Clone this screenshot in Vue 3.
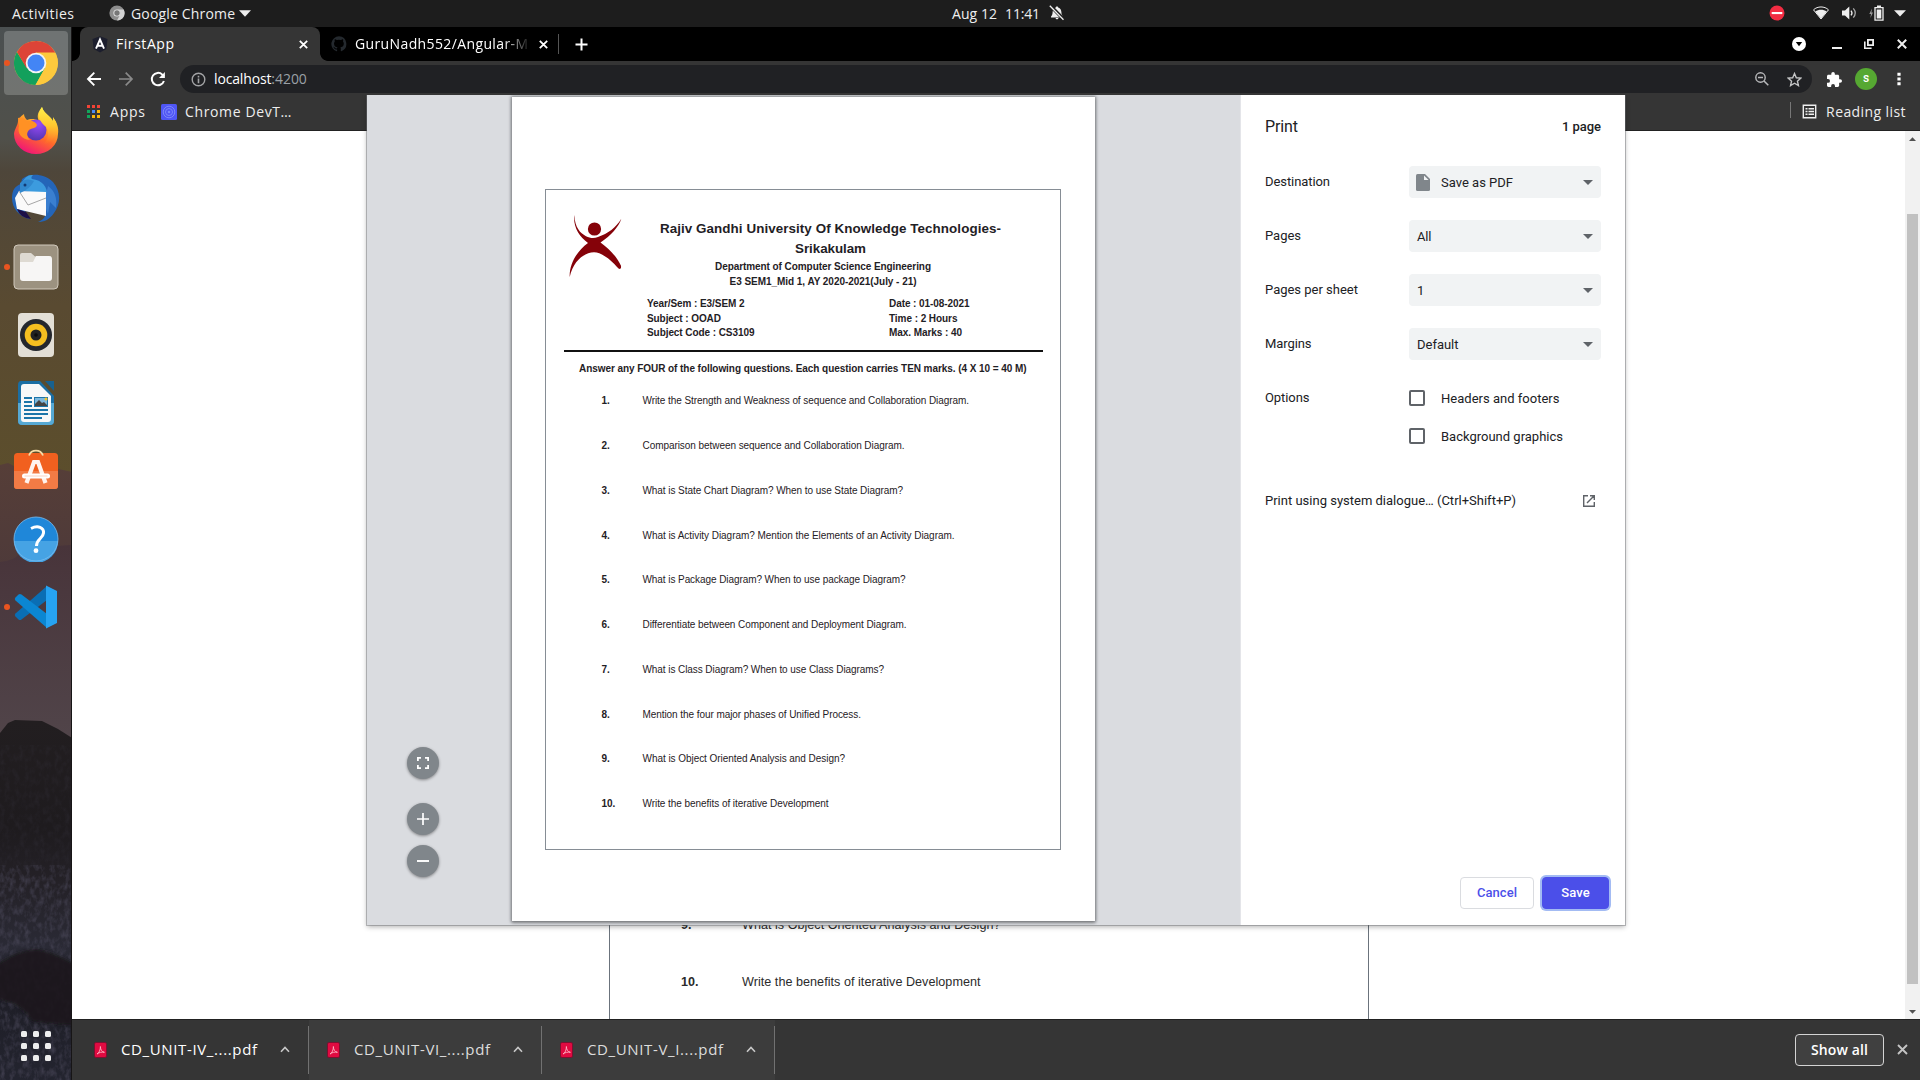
<script setup>
// Sets the tracking of a label so that it takes exactly the given width.
const vFit = {
  mounted(el, { value }) {
    const n = el.textContent.length
    const w = el.getBoundingClientRect().width
    el.style.letterSpacing = (value - w) / Math.max(1, n - 1) + 'px'
  },
}

const questions = [
  ['Write the Strength and Weakness of sequence and Collaboration Diagram.', 326.5],
  ['Comparison between sequence and Collaboration Diagram.', 262],
  ['What is State Chart Diagram? When to use State Diagram?', 260.5],
  ['What is Activity Diagram? Mention the Elements of an Activity Diagram.', 312],
  ['What is Package Diagram? When to use package Diagram?', 263],
  ['Differentiate between Component and Deployment Diagram.', 264],
  ['What is Class Diagram? When to use Class Diagrams?', 241.5],
  ['Mention the four major phases of Unified Process.', 218.5],
  ['What is Object Oriented Analysis and Design?', 202.5],
  ['Write the benefits of iterative Development', 186],
]
const metaLeft = [['Year/Sem : E3/SEM 2', 97.5], ['Subject : OOAD', 74], ['Subject Code : CS3109', 107.5]]
const metaRight = [['Date : 01-08-2021', 80.5], ['Time : 2 Hours', 68.5], ['Max. Marks : 40', 73]]
const selects = [
  { label: 'Destination', lw: 65, value: 'Save as PDF', vw: 72, file: true },
  { label: 'Pages', lw: 36, value: 'All', vw: 14.5 },
  { label: 'Pages per sheet', lw: 93, value: '1', vw: 7 },
  { label: 'Margins', lw: 46.5, value: 'Default', vw: 41.5 },
]
const downloads = ['CD_UNIT-IV_....pdf', 'CD_UNIT-VI_....pdf', 'CD_UNIT-V_I....pdf']
const appDots = ['#f44336', '#f44336', '#f44336', '#12a65c', '#4a8af4', '#fbb50b', '#12a65c', '#fbb50b', '#fbb50b']
</script>

<template>
  <div class="desktop">
    <header class="topbar">
      <span class="activities"><span v-fit="62">Activities</span></span>
      <svg class="tb-chrome" width="16" height="16" viewBox="0 0 16 16">
        <circle cx="8" cy="8" r="7.6" fill="#8d8d8d" />
        <path d="M8 4.4h6.7A7.6 7.6 0 0 1 8 15.6l3-5.8A3.6 3.6 0 0 0 8 4.4z" fill="#d2d2d2" />
        <circle cx="8" cy="8" r="3.6" fill="#e8e8e8" />
        <circle cx="8" cy="8" r="2.7" fill="#777" />
      </svg>
      <span class="tb-app"><span v-fit="104">Google Chrome</span></span>
      <svg class="tb-arrow" width="12" height="7" viewBox="0 0 12 7"><path d="M0 .3h12L6 6.8z" fill="#eee" /></svg>
      <span class="clock"><span v-fit="45">Aug 12</span><span v-fit="35" class="time">11:41</span></span>
      <svg class="bell" width="16" height="16" viewBox="0 0 16 16">
        <path d="M8 1.4c.8 0 1.2.5 1.2 1.1C11.4 3 12.3 5 12.4 7.3c.1 2.2.6 3.2 1.6 4.2v.9H2v-.9c1-1 1.5-2 1.6-4.2C3.7 5 4.6 3 6.8 2.5 6.8 1.9 7.2 1.4 8 1.4zM6.6 13h2.8c0 1.800-2.800 1.800-2.800 0z" fill="#eee" />
        <path d="M1 .3L15.3 15" stroke="#1d1d1d" stroke-width="3.4" />
        <path d="M.8 .8L14.5 14.7" stroke="#eee" stroke-width="1.3" />
      </svg>
      <div class="tray">
        <svg width="16" height="16" viewBox="0 0 16 16" class="t-dnd"><circle cx="8" cy="8" r="7.5" fill="#f22c42" /><path d="M2.7 7h10.6v2.1H2.7z" fill="#fff" /></svg>
        <svg width="16" height="14" viewBox="0 0 16 14" class="t-wifi"><path d="M.5 3.8C4.5 0 11.5 0 15.5 3.8L8 13z" fill="none" stroke="#eee" stroke-width="1" /><path d="M2.3 5.6C5.5 3 10.5 3 13.7 5.6L8 12.8z" fill="#eee" /></svg>
        <svg width="16" height="14" viewBox="0 0 16 14" class="t-vol"><path d="M0 4.5h3L7.3.6v12.800L3 9.500H0z" fill="#eee" /><path d="M9 4.600q2 2.400 0 4.800" fill="none" stroke="#eee" stroke-width="1.300" /><path d="M11.300 2.400q3.900 4.600 0 9.200" fill="none" stroke="#aaa" stroke-width="1.300" /></svg>
        <svg width="15" height="16" viewBox="0 0 15 16" class="t-bat"><path d="M3 3.500L.3 9h1.700l-.6 4L4 7.500H2.400z" fill="#999" /><path d="M6 2.700h8v12.500H6z" fill="none" stroke="#eee" stroke-width="1.300" /><path d="M8 .5h4v2H8zM7.700 4.400h4.600v9H7.700z" fill="#eee" /></svg>
        <svg width="12" height="7" viewBox="0 0 12 7" class="t-arr"><path d="M0 .3h12L6 6.500z" fill="#eee" /></svg>
      </div>
    </header>

    <div class="main">
      <nav class="dock">
        <svg class="wall" width="72" height="1053" viewBox="0 27 72 1053" preserveAspectRatio="none">
          <defs>
            <linearGradient id="sky" x1="0" y1="0" x2="0" y2="1">
              <stop offset="0" stop-color="#4b5051" /><stop offset=".25" stop-color="#50504a" />
              <stop offset=".32" stop-color="#4e463a" /><stop offset=".62" stop-color="#594a31" /><stop offset="1" stop-color="#5c4e2c" />
            </linearGradient>
            <linearGradient id="hill" x1="0" y1="0" x2="0" y2="1"><stop offset="0" stop-color="#563e38" /><stop offset="1" stop-color="#4c393a" /></linearGradient>
            <linearGradient id="low" x1="0" y1="0" x2="0" y2="1"><stop offset="0" stop-color="#48343a" /><stop offset="1" stop-color="#51454a" /></linearGradient>
            <linearGradient id="rock" x1="0" y1="0" x2="0" y2="1">
              <stop offset="0" stop-color="#221e20" /><stop offset=".3" stop-color="#1e1b1e" />
              <stop offset=".45" stop-color="#242127" /><stop offset=".63" stop-color="#2a2a35" /><stop offset=".8" stop-color="#1f1f28" /><stop offset="1" stop-color="#23242f" />
            </linearGradient>
            <filter id="grain" x="0" y="0" width="1" height="1" color-interpolation-filters="sRGB">
              <feTurbulence type="fractalNoise" baseFrequency=".2 .13" numOctaves="3" seed="4" result="n" />
              <feColorMatrix in="n" values="0 0 0 0 .3  0 0 0 0 .29  0 0 0 0 .36  2.2 0 0 0 -.9" />
              <feComposite in2="SourceGraphic" operator="in" />
            </filter>
            <filter id="soft" x="-.2" y="-.2" width="1.4" height="1.4"><feGaussianBlur stdDeviation="1.5" /></filter>
          </defs>
          <path d="M0 27h72v450H0z" fill="url(#sky)" />
          <path d="M0 465l8-2 8 4 14 0 10 4 14-3 18 4v120H0z" fill="url(#hill)" />
          <path d="M0 562q14-1 20-9l16-4 20-3 16-1v200H0z" fill="url(#low)" />
          <path d="M0 733l8-10 7-3 27 1 16 8 14 9v342H0z" fill="url(#rock)" />
          <path d="M0 745h72v335H0z" fill="#333" filter="url(#grain)" opacity=".15" />
          <path d="M0 865h72v215H0z" fill="#333" filter="url(#grain)" opacity=".55" />
          <path d="M-4 965q22-15 40-16 16 2 40 16v60q-22 0-44-4-10-18-36-22z" fill="#1a171b" opacity=".9" filter="url(#soft)" />
        </svg>
        <div class="apps">
          <div class="app active">
            <i class="run"></i>
            <svg width="46" height="46" viewBox="0 0 46 46">
              <circle cx="23" cy="23" r="22" fill="#fdc93d" />
              <path d="M3.900 12A22 22 0 0 0 22.500 45l9.500-17-9-5-9 5z" fill="#13a05c" />
              <path d="M32.500 12.500H42A22 22 0 0 1 22.500 45L32 28z" fill="#fdc93d" />
              <path d="M4 12A22 22 0 0 1 42.300 12.500H23L13.500 28z" fill="#dd4437" />
              <circle cx="23" cy="23" r="10.300" fill="#f4f4f4" /><circle cx="23" cy="23" r="8.500" fill="#4385f5" />
            </svg>
          </div>
          <div class="app fox">
            <svg width="46" height="48" viewBox="0 0 46 48">
              <defs>
                <linearGradient id="ff" x1=".8" y1="0" x2=".3" y2="1"><stop offset="0" stop-color="#fff44f" /><stop offset=".35" stop-color="#ffb02a" /><stop offset=".6" stop-color="#ff6a2a" /><stop offset="1" stop-color="#f0127a" /></linearGradient>
                <linearGradient id="fy" x1=".5" y1="0" x2=".5" y2="1"><stop offset="0" stop-color="#fff14a" /><stop offset=".5" stop-color="#ffc62f" /><stop offset="1" stop-color="#ff7a2a" stop-opacity="0" /></linearGradient>
                <radialGradient id="fp" cx=".6" cy=".2" r=".9"><stop offset="0" stop-color="#9b4bfa" /><stop offset="1" stop-color="#4a34a8" /></radialGradient>
              </defs>
              <path d="M29 1c-5 6-5 10-3 14-5-3-10-2-12-1-2-2-3-4-3-6-4 3-6 5-6 7 0 4-4 9-4 13a22 20 0 0 0 44 0c1-6-1-12-5-16l0 4C38 10 30 7 29 1z" fill="url(#ff)" />
              <circle cx="23" cy="24" r="10.500" fill="url(#fp)" />
              <path d="M5 12c4-1 7 1 9 3 5-1 9 1 10 4-1 4-6 3-8 5-3 3-2 7 1 10-9-1-13-7-11-14z" fill="#ff9124" />
              <path d="M29 1c-6 9-2 15 4 20 4 5 2 13-3 18 11-3 16-12 13-23l-3-5v4C38 10 31 8 29 1z" fill="url(#fy)" />
            </svg>
          </div>
          <div class="app">
            <svg width="50" height="50" viewBox="0 0 50 50">
              <path d="M11 5C18-1 33-1 42 8c8 9 8 22 1 31-5 7-10 9-16 9 5-2 7-5 8-8L14 37c1 4 3 6 5 8C8 43 1 34 1 24 1 16 4 12 10 10z" fill="#2465b8" />
              <path d="M10 10Q15 0 22 1c-2 2-2 3-1 4 10 1 16 8 15 17L15 17c-4-1-6 0-7 3z" fill="#3c9bde" />
              <path d="M37 12q10 7 8 22l-6-6-2 12-4-10z" fill="#3a7fd0" />
              <path d="M4 24L8 17l27 1v24L6 35z" fill="#fafafa" /><path d="M8 17l9 14L35 24" fill="none" stroke="#a6a6a6" stroke-width="1" />
              <path d="M9 9q6-6 14-2-4 8-14 12z" fill="#3188ce" /><circle cx="14" cy="11" r="1.500" fill="#123a74" />
              <path d="M6 35l9 3 5 7Q9 44 6 35z" fill="#1d1048" />
            </svg>
          </div>
          <div class="app">
            <i class="run"></i>
            <svg width="46" height="46" viewBox="0 0 46 46">
              <rect x="1" y="1" width="44" height="44" rx="4" fill="#9c9280" stroke="#d0c8bb" stroke-width="1" />
              <path d="M7 11q0-2 2-2h9l4 3.500h16V28H7z" fill="#dedad2" /><path d="M7 18h13l3-6h13q3 0 3 3v19q0 3-3 3H10q-3 0-3-3z" fill="#f7f6f5" />
            </svg>
          </div>
          <div class="app">
            <svg width="38" height="46" viewBox="0 0 38 46">
              <rect x="1" y="1" width="36" height="44" rx="4" fill="#e3dfd6" />
              <circle cx="19" cy="23" r="16" fill="#24272d" /><circle cx="19" cy="23" r="11.300" fill="#f4be20" /><circle cx="19" cy="23" r="5.500" fill="#222" /><circle cx="19" cy="23" r="1.800" fill="#0c0c0c" />
            </svg>
          </div>
          <div class="app">
            <svg width="38" height="46" viewBox="0 0 38 46">
              <path d="M4 1h19l14 15v25q0 4-4 4H5q-4 0-4-4V5q0-4 3-4z" fill="#1b6ea3" /><path d="M1 23h36v18q0 4-4 4H5q-4 0-4-4z" fill="#56a9d4" />
              <path d="M28 1h9v10z" fill="#18618f" /><path d="M7 4h15l12 12v23q0 3-3 3H7q-3 0-3-3V7q0-3 3-3z" fill="#f8f8f8" />
              <path d="M7 17h8v2H7zM7 21h8v2H7zM7 25h8v2H7zM7 29h24v2H7zM7 33h24v2H7zM7 37h18v2H7zM17 17h14v10H17z" fill="#1c75a9" />
              <path d="M18 18h12v8H18z" fill="#7db8dd" /><path d="M18 26v-2l4-4 3 3 2-1 3 3v1z" fill="#444" /><circle cx="29" cy="19" r="1.500" fill="#f3c530" />
            </svg>
          </div>
          <div class="app">
            <svg width="46" height="46" viewBox="0 0 46 46" class="store">
              <rect x="1" y="8" width="44" height="36" rx="3.500" fill="#f1601f" /><path d="M1 26h44v15q0 3-3 3H4q-3 0-3-3z" fill="#f27b45" />
              <path d="M16 10.500a7.500 7.500 0 0 1 14 0" fill="none" stroke="#f4dca8" stroke-width="1.800" />
              <path d="M13.500 38L21 17h4l7.500 21" fill="none" stroke="#fff4ef" stroke-width="4.200" /><path d="M11.500 31h23" stroke="#fff" stroke-width="5" stroke-linecap="round" /><path d="M11.500 31h23" stroke="#fbd3c2" stroke-width="1" />
            </svg>
          </div>
          <div class="app">
            <svg width="46" height="46" viewBox="0 0 46 46">
              <circle cx="23" cy="23" r="22" fill="#1f87d9" /><path d="M1 25h44a22 22 0 0 1-44 0z" fill="#46a3e4" /><circle cx="23" cy="23" r="22" fill="none" stroke="#7abcf0" stroke-width=".8" />
              <path d="M18 12.500c7-3.500 13-1 12.500 4.500-.5 5.500-7 6-7 13" fill="none" stroke="#fff" stroke-width="3" /><circle cx="23" cy="34.700" r="2.400" fill="#fff" />
            </svg>
          </div>
          <div class="app">
            <i class="run"></i>
            <svg width="44" height="44" viewBox="0 0 44 44">
              <path d="M33 1L1.500 28.500q-1.500 1.500 0 3l3 3q1.300 1 3 0L33 15z" fill="#0a6eb4" /><path d="M33 43L1.500 15.500q-1.500-1.500 0-3l3-3q1.300-1 3 0L33 29z" fill="#0b86d2" />
              <path d="M32 .5L43 6v32l-11 5.500z" fill="#26a3f2" />
            </svg>
          </div>
        </div>
        <div class="grid-launch"><i v-for="n in 9" :key="n"></i></div>
      </nav>

      <section class="browser">
        <div class="tabs">
          <div class="tab on">
            <svg width="16" height="17" viewBox="0 0 16 17"><path d="M8 .3l7.500 2.600-1.200 10L8 16.600l-6.300-3.700L.5 2.900z" fill="#1c1e2d" /><path d="M4 12.700L8 3.500l4 9.200M5.500 9.700h5" fill="none" stroke="#fff" stroke-width="1.900" /></svg>
            <span class="t-name"><span v-fit="58">FirstApp</span></span>
            <svg class="x" width="9" height="9" viewBox="0 0 9 9"><path d="M.8 .8l7.400 7.400M8.200.8L.8 8.200" stroke="#fff" stroke-width="1.800" /></svg>
          </div>
          <div class="tab two">
            <svg width="16" height="16" viewBox="0 0 16 16"><path d="M8 .3a7.700 7.700 0 0 0-2.400 15c.4 0 .5-.2.500-.4v-1.500c-2.200.5-2.700-.9-2.700-.9-.3-.9-.9-1.200-.9-1.200-.7-.5 0-.5 0-.5.8.1 1.200.8 1.200.8.7 1.200 1.900.9 2.300.7 0-.5.300-.9.5-1.100-1.700-.2-3.500-.9-3.500-3.800 0-.8.300-1.500.8-2-.1-.3-.4-1.100.1-2.100 0 0 .6-.2 2.100.8a7 7 0 0 1 3.800 0c1.500-1 2.100-.8 2.100-.8.500 1 .2 1.800.1 2.100.5.500.8 1.200.8 2 0 2.900-1.800 3.600-3.500 3.800.3.200.5.700.5 1.400v2.200c0 .2.100.5.500.4A7.700 7.700 0 0 0 8 .3z" fill="#24292e" /></svg>
            <span class="t-name fade"><span v-fit="173">GuruNadh552/Angular-M</span></span>
            <svg class="x" width="9" height="9" viewBox="0 0 9 9"><path d="M.8 .8l7.400 7.400M8.200.8L.8 8.200" stroke="#fff" stroke-width="1.800" /></svg>
          </div>
          <i class="tab-sep"></i>
          <svg class="plus" width="13" height="13" viewBox="0 0 13 13"><path d="M6.500 .5v12M.5 6.500h12" stroke="#fff" stroke-width="2" /></svg>
          <div class="wins">
            <svg width="14" height="14" viewBox="0 0 14 14"><circle cx="7" cy="7" r="7" fill="#fff" /><path d="M3.800 5h6.400L7 9.200z" fill="#000" /></svg>
            <svg width="10" height="14" viewBox="0 0 10 14"><path d="M0 10h10v2H0z" fill="#eee" /></svg>
            <svg width="10" height="10" viewBox="0 0 10 10"><path d="M3.900 .9h5.200v5.200H3.900z" fill="none" stroke="#eee" stroke-width="1.800" /><path d="M.8 2.400v6.800h6.800" fill="none" stroke="#eee" stroke-width="1.600" /></svg>
            <svg width="10" height="10" viewBox="0 0 10 10"><path d="M.8 .8l8.400 8.400M9.200.8L.8 9.200" stroke="#eee" stroke-width="2" /></svg>
          </div>
        </div>

        <div class="toolbar">
          <svg width="16" height="16" viewBox="0 0 16 16"><path d="M15 8H2.500M8.300 1.700L2 8l6.300 6.300" fill="none" stroke="#fff" stroke-width="1.900" /></svg>
          <svg width="16" height="16" viewBox="0 0 16 16"><path d="M1 8h12.500M7.700 1.700L14 8l-6.300 6.300" fill="none" stroke="#8a8a8a" stroke-width="1.700" /></svg>
          <svg width="16" height="16" viewBox="0 0 16 16"><path d="M13.900 10A6.200 6.200 0 1 1 12.300 3.600L14 5.200" fill="none" stroke="#fff" stroke-width="2" /><path d="M14.900 .9v6H9z" fill="#fff" /></svg>
          <div class="omni">
            <svg width="15" height="15" viewBox="0 0 15 15"><circle cx="7.500" cy="7.500" r="6.300" fill="none" stroke="#a2a3a5" stroke-width="1.400" /><path d="M6.700 6.500h1.600v4.700H6.700zM6.700 3.800h1.600v1.600H6.700z" fill="#a2a3a5" /></svg>
            <span class="url"><span v-fit="57.5">localhost</span><span v-fit="35.5" class="port">:4200</span></span>
            <svg class="mag" width="14" height="14" viewBox="0 0 14 14"><circle cx="5.500" cy="5.500" r="4.700" fill="none" stroke="#b8b9bb" stroke-width="1.400" /><path d="M3 5.500h5M9 9l4.300 4.300" stroke="#b8b9bb" stroke-width="1.500" /></svg>
            <svg width="15" height="15" viewBox="0 0 24 24"><path d="M12 2.500l2.900 6.700 7.300.6-5.500 4.800 1.600 7.100L12 17.900l-6.300 3.800 1.600-7.100-5.500-4.800 7.300-.6z" fill="none" stroke="#c4c5c6" stroke-width="2.200" /></svg>
          </div>
          <svg class="puz" width="15" height="15" viewBox="2 1 21 21"><path d="M20.500 11H19V7c0-1.100-.9-2-2-2h-4V3.500a2.500 2.500 0 0 0-5 0V5H4c-1.100 0-2 .9-2 2v3.800h1.500a2.700 2.700 0 0 1 0 5.400H2V20c0 1.100.9 2 2 2h3.800v-1.500a2.700 2.700 0 0 1 5.400 0V22H17c1.100 0 2-.9 2-2v-4h1.500a2.500 2.500 0 0 0 0-5z" fill="#fff" /></svg>
          <span class="avatar">s</span>
          <svg class="dots" width="4" height="14" viewBox="0 0 4 14"><path d="M.4 .7h3.200v3H.4zM.4 5.500h3.200v3H.4zM.4 10.300h3.200v3H.4z" fill="#fff" /></svg>
        </div>

        <div class="marks">
          <div class="nine"><i v-for="(c, i) in appDots" :key="i" :style="{ background: c }"></i></div>
          <span class="m1"><span v-fit="35">Apps</span></span>
          <svg class="dev" width="16" height="16" viewBox="0 0 16 16"><rect width="16" height="16" rx="1.500" fill="#4f56f5" /><circle cx="8" cy="8" r="5.800" fill="none" stroke="#7d86fa" /><circle cx="8" cy="8" r="3.500" fill="none" stroke="#7d86fa" /><circle cx="8" cy="8" r="1.300" fill="#7d86fa" /></svg>
          <span class="m2"><span v-fit="106.5">Chrome DevT…</span></span>
          <i class="m-sep"></i>
          <svg width="15" height="15" viewBox="0 0 15 15"><path d="M1.300 1.300h12.400v12.400H1.300z" fill="none" stroke="#eee" stroke-width="1.400" /><path d="M3.500 4h2v1.600h-2zM6.500 4H12v1.600H6.500zM3.500 6.700h2v1.600h-2zM6.500 6.700H12v1.600H6.500zM3.500 9.400h2V11h-2zM6.500 9.400H12V11H6.500z" fill="#eee" /></svg>
          <span class="m3"><span v-fit="79.5">Reading list</span></span>
        </div>

        <main class="viewport">
          <div class="sheet">
            <div class="bq"><b v-fit="10.5">9.</b><span v-fit="258.5">What is Object Oriented Analysis and Design?</span></div>
            <div class="bq"><b v-fit="17.5">10.</b><span v-fit="238.5">Write the benefits of iterative Development</span></div>
          </div>
          <div class="scroll">
            <svg width="7" height="4" viewBox="0 0 7 4"><path d="M0 4L3.500 .2 7 4z" fill="#505050" /></svg>
            <i class="thumb"></i>
            <svg width="7" height="4" viewBox="0 0 7 4"><path d="M0 0h7L3.500 3.800z" fill="#505050" /></svg>
          </div>
        </main>

        <footer class="shelf">
          <div v-for="(d, i) in downloads" :key="d" class="dl" :class="{ lit: i > 0 }">
            <svg width="13" height="16" viewBox="0 0 13 16"><rect x=".5" y=".5" width="12" height="15" rx="1.500" fill="#e00b41" stroke="#7c1030" /><path d="M3 12c2-1 3.500-4 3.400-7.500 0 3 1.500 5.500 4 5.800-2.700-.5-5 0-7.400 1.700z" fill="none" stroke="#ffb3c4" stroke-width=".9" /></svg>
            <span class="dl-name"><span v-fit="136">{{ d }}</span></span>
            <svg class="chev" width="10" height="7" viewBox="0 0 10 7"><path d="M1 5.800L5 1.500l4 4.300" fill="none" stroke="#c8c8c8" stroke-width="1.600" /></svg>
          </div>
          <span class="showall"><span v-fit="57">Show all</span></span>
          <svg class="sx" width="11" height="11" viewBox="0 0 11 11"><path d="M1 1l9 9M10 1l-9 9" stroke="#c4c4c4" stroke-width="1.900" /></svg>
        </footer>
      </section>
    </div>

    <div class="dialog">
      <div class="preview">
        <div class="zoomers">
          <span class="fab"><svg width="12" height="12" viewBox="0 0 12 12"><path d="M.9 4V.9H4M8 .9h3.100V4M11.100 8v3.100H8M4 11.100H.9V8" fill="none" stroke="#fff" stroke-width="1.800" /></svg></span>
          <span class="fab gap"><svg width="12" height="12" viewBox="0 0 12 12"><path d="M6 0v12M0 6h12" stroke="#fff" stroke-width="1.700" /></svg></span>
          <span class="fab"><svg width="12" height="12" viewBox="0 0 12 12"><path d="M0 6h12" stroke="#fff" stroke-width="1.900" /></svg></span>
        </div>
        <div class="paper">
          <article class="frame">
            <div class="head">
              <svg width="53" height="62" viewBox="0 0 53 62">
                <g fill="#850209"><circle cx="25.500" cy="14" r="6.600" />
                <path d="M5.300 0C6 14 11 20 17 23.500c4 2.300 8 2.500 12 1C39 21 47 14 52.300 4.300 50 13 42 23 31.500 30.500 41 38 48 47 52 56.500c.3 3-.5 4-2.500 3C43 51 34 42 25 41.500 14 42 4 52 .7 69 .2 54 8 40 19 31 10 23.500 4 13 5.300 0z" transform="scale(1 .9)" /></g>
              </svg>
              <div class="titles">
                <div class="ttl"><span v-fit="341">Rajiv Gandhi University Of Knowledge Technologies-</span></div>
                <div class="ttl"><span v-fit="71">Srikakulam</span></div>
                <div class="sub"><span v-fit="216">Department of Computer Science Engineering</span></div>
                <div class="sub two"><span v-fit="187">E3 SEM1_Mid 1, AY 2020-2021(July - 21)</span></div>
              </div>
            </div>
            <div class="meta">
              <div class="mcol"><div v-for="m in metaLeft" :key="m[0]"><span v-fit="m[1]">{{ m[0] }}</span></div></div>
              <div class="mcol"><div v-for="m in metaRight" :key="m[0]"><span v-fit="m[1]">{{ m[0] }}</span></div></div>
            </div>
            <div class="rule"></div>
            <div class="answer"><span v-fit="447.5">Answer any FOUR of the following questions. Each question carries TEN marks. (4 X 10 = 40 M)</span></div>
            <div v-for="(q, i) in questions" :key="i" class="q"><b>{{ i + 1 }}.</b><span v-fit="q[1]">{{ q[0] }}</span></div>
          </article>
        </div>
      </div>
      <aside class="side">
        <div class="s-head"><span class="h"><span v-fit="33">Print</span></span><span class="pages"><span v-fit="39">1 page</span></span></div>
        <div v-for="s in selects" :key="s.label" class="row">
          <label><span v-fit="s.lw">{{ s.label }}</span></label>
          <div class="select" :class="{ file: s.file }">
            <svg v-if="s.file" width="14" height="17" viewBox="0 0 14 17"><path d="M1.500 0H9l5 5v10.500q0 1.500-1.500 1.500h-11Q0 17 0 15.500v-14Q0 0 1.500 0z" fill="#80868b" /><path d="M8 1.500V6h4.600z" fill="#f1f3f4" /></svg>
            <span><span v-fit="s.vw">{{ s.value }}</span></span>
            <svg class="caret" width="10" height="5" viewBox="0 0 10 5"><path d="M0 0h10L5 5z" fill="#5f6368" /></svg>
          </div>
        </div>
        <div class="row opts">
          <label><span v-fit="44.5">Options</span></label>
          <div class="checks">
            <div class="chk"><i></i><span v-fit="118.5">Headers and footers</span></div>
            <div class="chk"><i></i><span v-fit="122">Background graphics</span></div>
          </div>
        </div>
        <div class="sys"><span><span v-fit="251">Print using system dialogue… (Ctrl+Shift+P)</span></span>
          <svg width="12" height="12" viewBox="0 0 12 12"><path d="M5 .7H.7v10.600h10.600V7M7 .7h4.300V5M11.200.8L4 8" fill="none" stroke="#5f6368" stroke-width="1.400" /></svg>
        </div>
        <div class="btns"><span class="btn"><span v-fit="40">Cancel</span></span><span class="btn prime"><span v-fit="28.5">Save</span></span></div>
      </aside>
    </div>
  </div>
</template>

<style>
body { margin: 0; overflow: hidden; background: #000; }
</style>

<style scoped>
.desktop { position: relative; width: 1920px; height: 1080px; overflow: hidden; font: 14px/20px "Open Sans", "Noto Sans", sans-serif; color: #eee; white-space: nowrap; display: flex; flex-direction: column; }
.desktop *, .desktop { box-sizing: border-box; }
svg { display: block; flex: none; }

.topbar { height: 27px; flex: none; background: #1d1d1d; display: flex; align-items: center; }
.activities { width: 97px; padding-left: 12px; }
.tb-chrome { margin-left: 12px; margin-top: -1px; }
.tb-app { width: 108px; margin-left: 6px; }
.tb-arrow { margin-top: -1px; }
.clock { margin-left: 701px; width: 98px; display: flex; }
.time { margin-left: 8px; }
.clock > span { flex: none; }
.bell { margin-top: -1px; margin-left: -1px; }
.tray { margin-left: auto; display: flex; align-items: center; padding-right: 14px; margin-top: -1px; }
.t-wifi { margin-left: 28px; }
.t-vol { margin-left: 13px; }
.t-bat { margin-left: 11px; margin-top: -1px; }
.t-arr { margin-left: 10px; }

.main { flex: 1; display: flex; min-height: 0; }
.dock { position: relative; width: 72px; flex: none; border-right: 1px solid #171516; display: flex; flex-direction: column; justify-content: space-between; overflow: hidden; }
.wall { position: absolute; left: 0; top: 0; }
.apps { position: relative; padding: 4px 0 0 4px; }
.app { position: relative; width: 64px; height: 64px; margin-bottom: 4px; display: flex; align-items: center; justify-content: center; }
.app.active { background: rgba(255, 255, 255, .2); border-radius: 4px; }
.app.fox svg { margin-top: -3px; }
.app .store { margin-top: -7px; }
.run { position: absolute; left: 0; top: 29px; width: 6px; height: 6px; border-radius: 50%; background: #e95420; }
.grid-launch { position: relative; display: grid; grid-template-columns: repeat(3, 6px); gap: 6px; margin: 0 0 19px 21px; }
.grid-launch i { height: 6px; border-radius: 1.5px; background: #eee; }

.browser { flex: 1; min-width: 0; display: flex; flex-direction: column; background: #353535; }
.tabs { height: 34px; flex: none; background: #000; display: flex; align-items: center; padding-left: 8px; }
.tab { height: 34px; display: flex; align-items: center; position: relative; }
.tab.on { width: 240px; background: #353535; border-radius: 8px 8px 0 0; padding: 0 12px; color: #fff; }
.tab.on::before, .tab.on::after { content: ""; position: absolute; bottom: 0; width: 8px; height: 8px; }
.tab.on::before { left: -8px; background: radial-gradient(circle at 0 0, #000 7.5px, #353535 8.2px); }
.tab.on::after { right: -8px; background: radial-gradient(circle at 100% 0, #000 7.5px, #353535 8.2px); }
.tab.two { width: 238px; padding: 0 10px 0 11px; color: #fff; }
.t-name { margin-left: 8px; }
.t-name.fade { width: 176px; -webkit-mask-image: linear-gradient(to right, #000 148px, transparent 176px); mask-image: linear-gradient(to right, #000 148px, transparent 176px); }
.x { margin-left: auto; }
.tab-sep { width: 1px; height: 20px; background: #555; }
.plus { margin-left: 16px; }
.wins { margin-left: auto; display: flex; align-items: center; padding-right: 13px; }
.wins svg { margin-left: 22px; }
.wins svg:nth-child(2) { margin-left: 26px; }
.wins svg:nth-child(4) { margin-left: 23px; }

.toolbar { height: 34px; flex: none; display: flex; align-items: center; padding: 2px 19px 0 14px; }
.toolbar > svg:nth-child(-n + 3) { margin-right: 16px; }
.toolbar > svg:nth-child(3) { margin-right: 14px; }
.omni { flex: none; width: 1632px; height: 28px; border-radius: 14px; background: #202124; display: flex; align-items: center; padding: 0 10px 0 10.5px; }
.url { margin-left: 8.5px; color: #fff; }
.port { color: #9aa0a6; }
.mag { margin-left: auto; margin-right: 18px; }
.puz { margin-left: 15px; }
.avatar { width: 22px; height: 22px; margin-left: 13px; border-radius: 50%; background: #56a832; color: #fff; font: 500 12px/21px Roboto, sans-serif; text-align: center; }
.dots { margin-left: 20px; }

.marks { height: 36px; flex: none; display: flex; align-items: center; padding: 0 14px 2px 15px; border-bottom: 1px solid #222; }
.nine { display: grid; grid-template-columns: repeat(3, 3px); gap: 2px; }
.nine i { height: 3px; }
.m1 { width: 51px; margin-left: 10px; }
.m2 { margin-left: 8px; }
.m-sep { width: 1px; height: 16px; background: #777; margin: -3px 11px 0 auto; }
.m3 { margin-left: 9px; }

.viewport { flex: 1; min-height: 0; background: #fff; display: flex; justify-content: space-between; }
.sheet { width: 760px; margin-left: 537px; border: solid #6b737c; border-width: 0 1px; padding: 784px 0 0 71px; color: #2b2b2b; font: 12.6px/20px "Liberation Sans", Arial, sans-serif; overflow: hidden; }
.bq { width: 320px; height: 57px; display: grid; grid-template-columns: 61px max-content; justify-items: start; }
.scroll { width: 15px; background: #f1f1f1; display: flex; flex-direction: column; align-items: center; padding: 6px 0 5px; }
.thumb { width: 11px; height: 770px; background: #c1c1c1; margin: 73px 0 auto; }

.shelf { height: 61px; flex: none; border-top: 1px solid #212121; display: flex; align-items: center; }
.dl { width: 233px; height: 60px; display: flex; align-items: center; padding-left: 18px; }
.dl:first-child { width: 237px; padding-left: 22px; }
.dl.lit { background: #3c3c3c; }
.dl::after { content: ""; width: 1px; height: 48px; background: #717171; margin-left: auto; }
.dl-name { width: 159px; margin: -2px 0 0 14px; font-size: 15px; color: #fff; }
.dl > svg { margin-top: -1px; }
.dl.lit .dl-name { color: #ddd; }
.showall { margin-left: auto; width: 89px; height: 32px; margin-top: -1px; border: 1px solid #d4d4d4; border-radius: 4px; background: #404040; text-align: center; font-weight: 600; line-height: 29px; color: #fff; }
.sx { margin: -1px 12px 0 13px; }

.dialog { position: absolute; left: 367px; top: 95px; width: 1258px; height: 830px; display: flex; box-shadow: 0 0 0 1px rgba(110, 112, 118, .45), 0 2px 5px rgba(0, 0, 0, .3); clip-path: inset(0 -10px -10px -10px); background: #fff; }
.preview { width: 874px; background: #dadce0; display: flex; position: relative; border-right: 1px solid #e4e5e9; overflow: hidden; }
.zoomers { width: 72px; padding-left: 40px; padding-top: 652px; margin-right: 73px; }
.fab { width: 32px; height: 32px; border-radius: 50%; background: #80868b; box-shadow: 0 1px 3px rgba(0, 0, 0, .4); display: flex; align-items: center; justify-content: center; margin-bottom: 10px; }
.fab.gap { margin-top: 24px; }
.paper { width: 583px; height: 824px; margin-top: 2px; background: #fff; box-shadow: 0 0 3px 1px rgba(60, 62, 66, .55), 0 2px 3px rgba(0, 0, 0, .25); padding: 92px 34px 0 33px; }
.frame { height: 661px; border: 1px solid #868d95; color: #1f2125; font: bold 10px/15px "Liberation Sans", Arial, sans-serif; padding: 25px 16px 0 17.5px; display: flex; flex-direction: column; }
.head { display: flex; height: 73px; padding-left: 5px; }
.titles { width: 383px; margin-left: 17.5px; padding-top: 4px; text-align: center; }
.ttl { font-size: 13.4px; line-height: 20px; }
.sub { margin-right: 15px; }
.meta { margin-top: 9px; padding-left: 83.5px; display: flex; line-height: 14.6px; }
.mcol:first-child { width: 242px; }
.rule { height: 2px; flex: none; background: #111; margin-top: 9px; width: 479px; }
.answer { margin: 9.5px 2px 16px 0; line-height: 16px; text-align: center; }
.q { height: 44.77px; flex: none; padding-left: 38px; display: grid; grid-template-columns: 41px max-content; line-height: 16px; font-weight: normal; }

.side { flex: 1; padding: 0 24px; color: #202124; font: 13px/20px Roboto, sans-serif; display: flex; flex-direction: column; }
.s-head { height: 71px; padding-top: 22px; display: flex; justify-content: space-between; }
.h { font-size: 16px; }
.pages { font-weight: 500; }
.row { height: 54px; display: flex; flex: none; }
.row label { width: 144px; padding-top: 6px; }
.select { width: 192px; height: 32px; border-radius: 4px; background: #f1f3f4; display: flex; align-items: center; padding: 2px 8px 0; }
.select.file { padding-left: 7px; }
.select.file svg + span { margin-left: 11px; }
.select svg { margin-top: -2px; }
.caret { margin-left: auto; }
.row.opts { height: 96px; }
.checks { padding-top: 8px; }
.chk { height: 38px; display: flex; align-items: flex-start; line-height: 18px; }
.chk i { width: 16px; height: 16px; border: 2px solid #5f6368; border-radius: 2px; margin-right: 16px; }
.sys { height: 30px; padding-top: 13px; display: flex; justify-content: space-between; padding-right: 6px; }
.sys svg { margin-top: 4px; }
.btns { margin: auto -8px 16px 0; display: flex; justify-content: flex-end; gap: 8px; font-weight: 500; }
.btn { width: 74px; height: 32px; border: 1px solid #dadce0; border-radius: 4px; line-height: 30px; text-align: center; color: #4b4fe9; }
.btn.prime { width: 67px; background: #4b4fe9; border-color: #4b4fe9; color: #fff; box-shadow: 0 0 0 2px #a3bbf3; }
</style>
